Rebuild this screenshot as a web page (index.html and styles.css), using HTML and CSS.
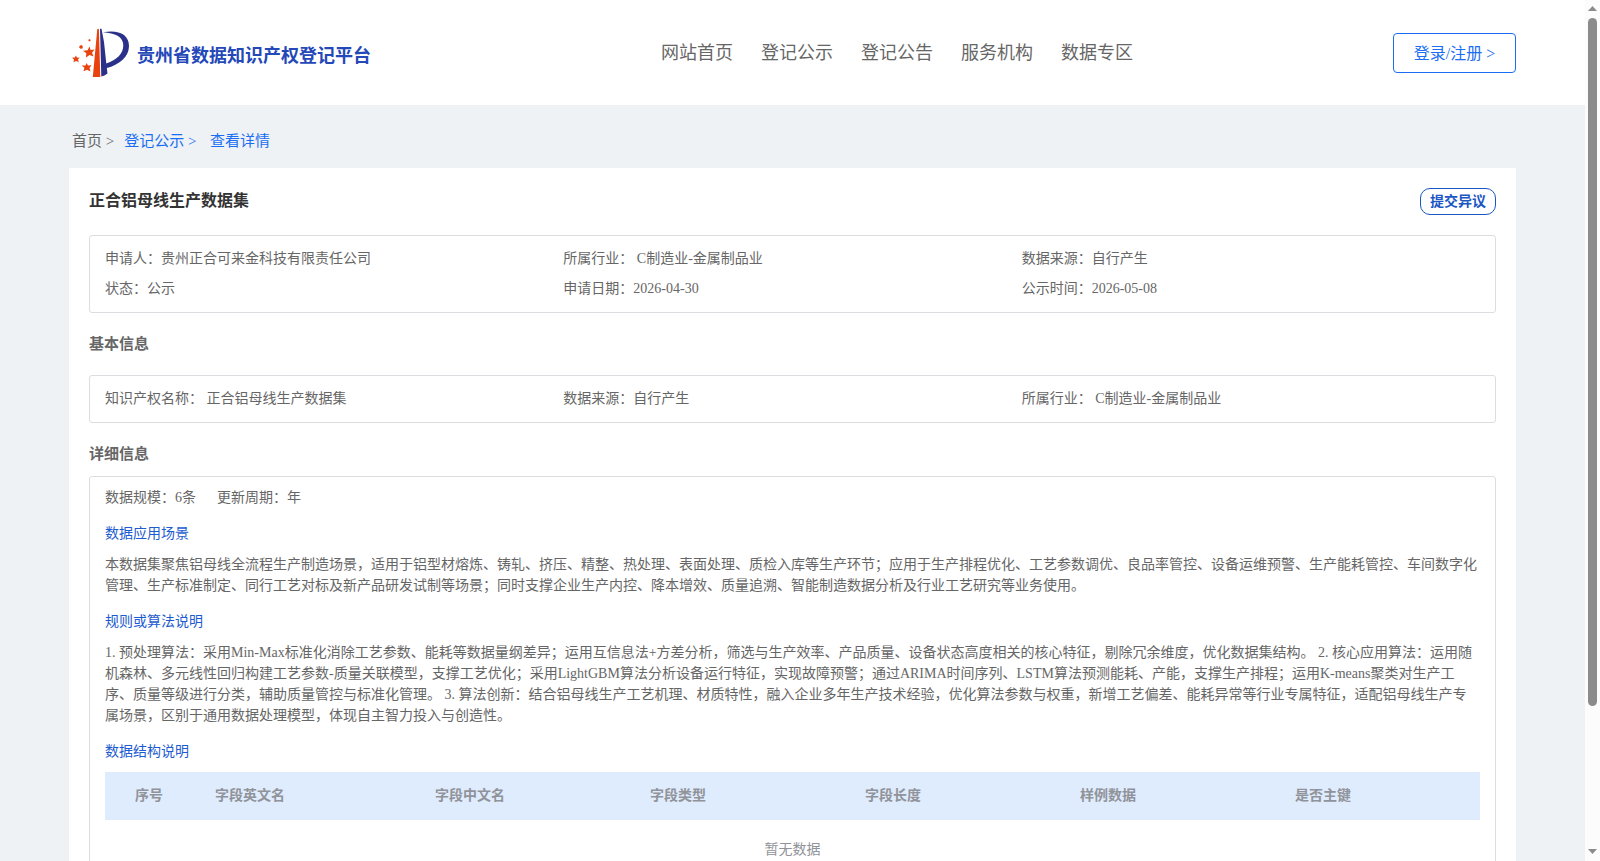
FILE: index.html
```html
<!DOCTYPE html>
<html lang="zh-CN">
<head>
    <meta charset="UTF-8">
    <meta name="viewport" content="width=device-width, initial-scale=1.0">
    <title>贵州省数据知识产权登记平台</title>
    <link rel="stylesheet" href="styles.css">
</head>
<body>
    <div class="page">
        <!-- Header -->
        <header class="header">
            <a class="brand">
                <svg class="logo" width="58" height="50" viewBox="0 0 58 50">
                    <path fill="#e8420f" d="M25.300 1H26.900L28.300 49H20.800Z"/>
                    <path fill="#2b3188" d="M28 0.700H29.500L32 14L34.300 35.500C45 31.500 51.300 26 51.300 17C51.300 9 43 5 31 4.300C46 1.500 57 6 57 18C57 29 47 37 34.800 40L35.500 45.600Q32.500 48 29.300 48.500Z"/>
                    <g fill="#e8420f">
                        <path d="M17.500 18.500L18.600 22L22.500 21.500L20 24.700L21.500 28.500L17.600 27L14 29.500L14.300 25.300L11 22.800L15.600 22.200Z"/>
                        <path d="M14.500 35L16 37.500L19.500 37.200L17.500 40L18.500 43.500L15 41.800L11.500 43.300L12.400 39.800L9.700 37.500L13.500 37.500Z"/>
                        <path d="M4 27.500L5 29.700L7.600 29.500L6 31.600L6.800 34L4 33L1.500 34.300L2 31.500L0 29.700L2.800 29.500Z"/>
                        <path d="M9.500 17L10.800 18.300L10.500 20.500L8.500 20.700L7 19.200L8 17.500Z"/>
                        <path d="M17.500 11L18.700 12L18 13.500L16.500 13L16.500 11.700Z"/>
                    </g>
                </svg>
                <span class="brand-name">贵州省数据知识产权登记平台</span>
            </a>
            <nav class="nav">
                <a>网站首页</a>
                <a>登记公示</a>
                <a>登记公告</a>
                <a>服务机构</a>
                <a>数据专区</a>
            </nav>
            <button class="login-btn">登录/注册 &gt;</button>
        </header>

        <main class="main">
            <div class="breadcrumb">
                <span>首页 &gt;</span>
                <a class="crumb">登记公示 &gt;</a>
                <a class="crumb current">查看详情</a>
            </div>

            <div class="card">
                <div class="card-head">
                    <h1 class="title">正合铝母线生产数据集</h1>
                    <button class="objection-btn">提交异议</button>
                </div>

                <div class="box info">
                    <div>申请人：贵州正合可来金科技有限责任公司</div>
                    <div>所属行业： C制造业-金属制品业</div>
                    <div>数据来源：自行产生</div>
                    <div>状态：公示</div>
                    <div>申请日期：2026-04-30</div>
                    <div>公示时间：2026-05-08</div>
                </div>

                <h2 class="section-title">基本信息</h2>
                <div class="box info">
                    <div>知识产权名称： 正合铝母线生产数据集</div>
                    <div>数据来源：自行产生</div>
                    <div>所属行业： C制造业-金属制品业</div>
                </div>

                <h2 class="section-title detail-title">详细信息</h2>
                <div class="box detail">
                    <div class="scale">
                        <span>数据规模：6条</span>
                        <span>更新周期：年</span>
                    </div>
                    <h3 class="sub-title">数据应用场景</h3>
                    <p class="text">本数据集聚焦铝母线全流程生产制造场景，适用于铝型材熔炼、铸轧、挤压、精整、热处理、表面处理、质检入库等生产环节；应用于生产排程优化、工艺参数调优、良品率管控、设备运维预警、生产能耗管控、车间数字化管理、生产标准制定、同行工艺对标及新产品研发试制等场景；同时支撑企业生产内控、降本增效、质量追溯、智能制造数据分析及行业工艺研究等业务使用。</p>
                    <h3 class="sub-title">规则或算法说明</h3>
                    <p class="text">1. 预处理算法：采用Min-Max标准化消除工艺参数、能耗等数据量纲差异；运用互信息法+方差分析，筛选与生产效率、产品质量、设备状态高度相关的核心特征，剔除冗余维度，优化数据集结构。 2. 核心应用算法：运用随机森林、多元线性回归构建工艺参数-质量关联模型，支撑工艺优化；采用LightGBM算法分析设备运行特征，实现故障预警；通过ARIMA时间序列、LSTM算法预测能耗、产能，支撑生产排程；运用K-means聚类对生产工序、质量等级进行分类，辅助质量管控与标准化管理。 3. 算法创新：结合铝母线生产工艺机理、材质特性，融入企业多年生产技术经验，优化算法参数与权重，新增工艺偏差、能耗异常等行业专属特征，适配铝母线生产专属场景，区别于通用数据处理模型，体现自主智力投入与创造性。</p>
                    <h3 class="sub-title">数据结构说明</h3>
                    <div class="table-head">
                        <span>序号</span>
                        <span>字段英文名</span>
                        <span>字段中文名</span>
                        <span>字段类型</span>
                        <span>字段长度</span>
                        <span>样例数据</span>
                        <span>是否主键</span>
                    </div>
                    <div class="table-empty">暂无数据</div>
                </div>
            </div>
        </main>
    </div>

    <!-- Scrollbar -->
    <div class="scrollbar">
        <svg width="15" height="15" viewBox="0 0 15 15"><path fill="#8b8b8b" d="M3 11H12L7.500 6Z"/></svg>
        <div class="thumb"></div>
        <svg class="arrow-down" width="15" height="15" viewBox="0 0 15 15"><path fill="#8b8b8b" d="M3 3H12L7.500 8Z"/></svg>
    </div>
</body>
</html>
```
FILE: styles.css
```css
* {
    box-sizing: border-box;
}
body {
    margin: 0;
    height: 861px;
    display: flex;
    overflow: hidden;
    font-family: "Liberation Serif", "Noto Sans CJK SC", serif;
    font-size: 14px;
    color: #666;
    background: #eef2f5;
}
h1, h2, h3, p {
    margin: 0;
}
button {
    font-family: inherit;
    background: #fff;
    padding: 0;
    white-space: nowrap;
}
.page {
    flex: 1;
    height: 861px;
    overflow: hidden;
}
.header {
    display: flex;
    height: 105px;
    padding: 0 69px 0 72px;
    background: #fff;
}
.brand {
    display: flex;
    width: 589px;
    padding-top: 28px;
}
.brand-name {
    margin-left: 7px;
    font-size: 18px;
    line-height: 56px;
    font-weight: bold;
    color: #2448b8;
}
.nav {
    display: flex;
    gap: 28px;
    font-size: 18px;
    line-height: 106px;
}
.login-btn {
    width: 123px;
    height: 40px;
    margin: 33px 0 0 auto;
    padding-bottom: 2px;
    border: 1px solid #1b6ef3;
    border-radius: 4px;
    font-size: 16px;
    color: #1b6ef3;
}
.main {
    padding: 0 69px;
}
.breadcrumb {
    display: flex;
    height: 63px;
    padding: 5px 0 0 3px;
    font-size: 15px;
    line-height: 62px;
}
.crumb {
    margin-left: 10px;
    color: #1b6ef3;
}
.current {
    margin-left: 13.5px;
}
.card {
    height: 900px;
    padding: 20px;
    background: #fff;
}
.card-head {
    display: flex;
    justify-content: space-between;
    height: 47px;
}
.title {
    font-size: 16px;
    line-height: 25px;
    color: #333;
}
.objection-btn {
    width: 76px;
    height: 27px;
    padding-bottom: 3px;
    border: 1px solid #1a56c4;
    border-radius: 10px;
    font-size: 14px;
    font-weight: bold;
    color: #1a56c4;
}
.box {
    border: 1px solid #dcdde0;
    border-radius: 3px;
    padding: 8px 15px;
}
.info {
    display: grid;
    grid-template-columns: repeat(3, 1fr);
    line-height: 30px;
}
.section-title {
    height: 62px;
    font-size: 15px;
    line-height: 63px;
}
.detail-title {
    height: 53px;
}
.detail {
    height: 500px;
    padding-top: 10px;
}
.scale {
    display: flex;
    gap: 21px;
    line-height: 21px;
}
.sub-title {
    margin-top: 15px;
    font-size: 14px;
    font-weight: normal;
    line-height: 21px;
    color: #1c5bd0;
}
.text {
    margin-top: 10px;
    line-height: 21px;
}
.table-head {
    display: grid;
    grid-template-columns: 80px 220px repeat(4, 215px) 1fr;
    margin-top: 10px;
    padding-left: 30px;
    line-height: 48px;
    font-weight: bold;
    color: #909399;
    background: #dfecfe;
}
.table-empty {
    text-align: center;
    line-height: 60px;
    color: #909399;
}
.scrollbar {
    display: flex;
    flex-direction: column;
    width: 15px;
    height: 861px;
    background: #fcfcfc;
}
.thumb {
    width: 9px;
    height: 688px;
    margin: 3px 3px 0;
    border-radius: 5px;
    background: #8b8b8b;
}
.arrow-down {
    margin-top: auto;
}
```
